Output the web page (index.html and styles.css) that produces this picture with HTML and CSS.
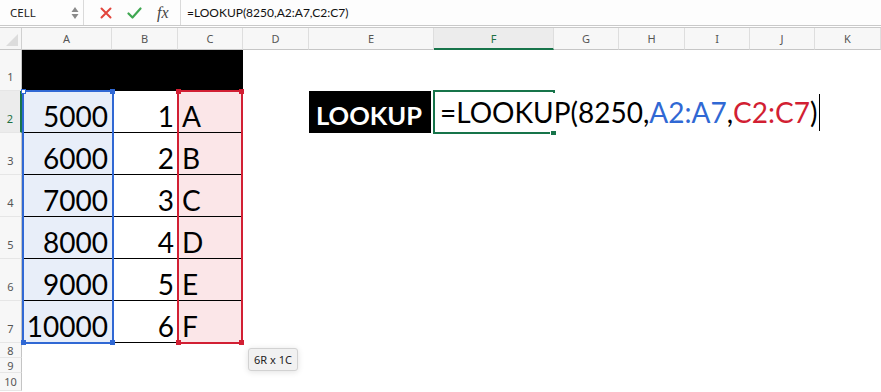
FILE: index.html
```html
<!DOCTYPE html>
<html lang="en">
<head>
    <meta charset="UTF-8">
    <title>LOOKUP</title>
    <link rel="stylesheet" href="styles.css">
</head>
<body>

    <div class="fbar">
        <div class="namebox">
            <span>CELL</span>
            <svg class="spin" width="8" height="16" viewBox="0 0 8 16">
                <path d="M4 2 L7.5 7 L0.5 7 Z" fill="#8a8a8a"/>
                <path d="M4 14 L7.5 9 L0.5 9 Z" fill="#8a8a8a"/>
            </svg>
        </div>
        <div class="tools">
            <svg width="12" height="12" viewBox="0 0 12 12">
                <path d="M1.5 1.5 L10.5 10.5 M10.5 1.5 L1.5 10.5" stroke="#e2453c" stroke-width="2" stroke-linecap="round"/>
            </svg>
            <svg width="15" height="12" viewBox="0 0 15 12">
                <path d="M1.5 6.5 L5.5 10.5 L13.5 1.5" stroke="#3fa751" stroke-width="2.2" fill="none" stroke-linecap="round" stroke-linejoin="round"/>
            </svg>
            <span class="fx">fx</span>
        </div>
        <div class="ftext">=LOOKUP(8250,A2:A7,C2:C7)</div>
    </div>
    <div class="gap"></div>

    <div class="sheet">
        <div class="corner"></div>
        <div class="ch">A</div>
        <div class="ch">B</div>
        <div class="ch">C</div>
        <div class="ch">D</div>
        <div class="ch">E</div>
        <div class="ch active">F</div>
        <div class="ch">G</div>
        <div class="ch">H</div>
        <div class="ch">I</div>
        <div class="ch">J</div>
        <div class="ch">K</div>

        <div class="rh">1</div>
        <div class="black"></div><div class="black"></div><div class="black"></div>

        <div class="rh active">2</div>
        <div class="cell num a">5000</div><div class="cell num b">1</div><div class="cell c">A</div>
        <div class="cell label">LOOKUP</div>

        <div class="rh">3</div>
        <div class="cell num a">6000</div><div class="cell num b">2</div><div class="cell c">B</div>

        <div class="rh">4</div>
        <div class="cell num a">7000</div><div class="cell num b">3</div><div class="cell c">C</div>

        <div class="rh">5</div>
        <div class="cell num a">8000</div><div class="cell num b">4</div><div class="cell c">D</div>

        <div class="rh">6</div>
        <div class="cell num a">9000</div><div class="cell num b">5</div><div class="cell c">E</div>

        <div class="rh">7</div>
        <div class="cell num a">10000</div><div class="cell num b">6</div><div class="cell c">F</div>

        <div class="rh sm">8</div>
        <div class="rh sm">9</div>
        <div class="rh sm">10</div>

        <!-- overlays: reference ranges, edited cell, size tip -->
        <div class="range blue">
            <span class="knob tl hollow"></span><span class="knob tr"></span>
            <span class="knob bl"></span><span class="knob br"></span>
        </div>
        <div class="range red">
            <span class="knob tl"></span><span class="knob tr"></span>
            <span class="knob bl"></span><span class="knob br"></span>
        </div>
        <div class="edit-cell"><span class="handle"></span></div>
        <div class="editor">=LOOKUP(8250,<span class="ref-a">A2:A7</span>,<span class="ref-c">C2:C7</span>)<span class="caret"></span></div>
        <div class="tip">6R x 1C</div>
    </div>

</body>
</html>
```

FILE: styles.css
```css
body {
    margin: 0;
    width: 881px;
    height: 392px;
    overflow: hidden;
    background: #fff;
    font-family: Lato, "Noto Sans", sans-serif;
    color: #000;
}

/* formula bar */
.fbar {
    display: flex;
    align-items: center;
    height: 25px;
    border-bottom: 1px solid #c9c9c9;
    background: #fdfdfd;
}
.namebox {
    box-sizing: border-box;
    width: 84px;
    height: 100%;
    display: flex;
    align-items: center;
    justify-content: space-between;
    padding: 0 4px 0 10px;
    border-right: 1px solid #dadada;
    font-family: "Noto Sans", sans-serif;
    font-size: 11.5px;
    color: #222;
}
.tools {
    box-sizing: border-box;
    width: 97px;
    height: 100%;
    display: flex;
    align-items: center;
    gap: 15px;
    padding-left: 16px;
    border-right: 1px solid #dadada;
}
.fx {
    font-family: "Liberation Serif", serif;
    font-style: italic;
    font-size: 16px;
    color: #444;
}
.ftext {
    padding-left: 6px;
    font-size: 12px;
    color: #111;
}
.gap {
    height: 1px;
}

/* grid */
.sheet {
    position: relative;
    display: grid;
    grid-template-columns: 22px 90px 66px 65px 66px 125px 120px 65px 66px 65px 65px 66px;
    grid-template-rows: 22px 41px repeat(6, 42px) 15px 15px 18px;
    border-top: 1px solid #c9c9c9;
}
.corner {
    background: #f6f6f6;
    border-right: 1px solid #d0d0d0;
    border-bottom: 1px solid #c6c6c6;
    position: relative;
}
.corner::after {
    content: "";
    position: absolute;
    right: 3px;
    bottom: 3px;
    border-left: 12px solid transparent;
    border-bottom: 12px solid #dcdcdc;
}
.ch {
    display: flex;
    align-items: center;
    justify-content: center;
    background: #f7f7f7;
    border-right: 1px solid #dedede;
    border-bottom: 1px solid #c6c6c6;
    font-family: "Noto Sans", sans-serif;
    font-size: 11px;
    color: #555;
}
.ch.active {
    background: #ececec;
    color: #1d7044;
    border-bottom: 2px solid #17744a;
}
.rh {
    grid-column: 1;
    display: flex;
    align-items: flex-end;
    justify-content: center;
    padding-bottom: 8px;
    background: #f7f7f7;
    border-right: 1px solid #c4c4c4;
    border-bottom: 1px solid #e6e6e6;
    font-family: "Noto Sans", sans-serif;
    font-size: 11px;
    line-height: 11px;
    color: #555;
}
.rh.sm {
    align-items: center;
    padding-bottom: 0;
}
.rh.active {
    background: #ececec;
    color: #1d7044;
    border-right: 2px solid #17744a;
}
.black {
    background: #000;
}

.cell {
    box-sizing: border-box;
    display: flex;
    align-items: flex-end;
    padding: 0 4px 2px;
    font-size: 28px;
    line-height: 1;
    white-space: nowrap;
}
.num {
    justify-content: flex-end;
}
.a {
    background: #e8eef9;
    border-bottom: 1px solid #000;
}
.b {
    border-bottom: 1px solid #000;
}
.c {
    background: #fbe6e8;
    border-bottom: 1px solid #000;
}
.label {
    grid-column: 6;
    background: #000;
    color: #fff;
    font-weight: bold;
    font-size: 25.5px;
    padding: 0 8px 5px 7px;
}

/* reference outlines */
.range {
    position: absolute;
    top: 62px;
    height: 254px;
    box-sizing: border-box;
    border: 2px solid;
}
.range.blue {
    left: 22px;
    width: 92px;
    border-color: #3068d4;
}
.range.red {
    left: 177px;
    width: 66px;
    border-color: #d21f33;
}
.knob {
    position: absolute;
    width: 5px;
    height: 5px;
    background: currentColor;
}
.blue .knob { color: #3068d4; }
.red .knob { color: #d21f33; }
.knob.tl { left: -3px; top: -3px; }
.knob.tr { right: -3px; top: -3px; }
.knob.bl { left: -3px; bottom: -3px; }
.knob.br { right: -3px; bottom: -3px; }
.knob.hollow {
    box-sizing: border-box;
    background: #fff;
    border: 1px solid #3068d4;
}

.edit-cell {
    position: absolute;
    left: 433px;
    top: 62px;
    width: 122px;
    height: 44px;
    box-sizing: border-box;
    border: 2px solid #17744a;
    box-shadow: -2px 0 0 #fff;
}
.handle {
    position: absolute;
    right: -3px;
    bottom: -3px;
    width: 5px;
    height: 6px;
    background: #17744a;
    border-left: 1px solid #fff;
}
.editor {
    position: absolute;
    left: 435px;
    top: 65px;
    height: 38px;
    display: flex;
    align-items: center;
    padding: 0 3px 0 5px;
    background: #fff;
    font-size: 28px;
    white-space: nowrap;
}
.ref-a { color: #3068d4; }
.ref-c { color: #d21f33; }
.caret {
    width: 1px;
    height: 37px;
    margin-left: 2px;
    background: #000;
}

.tip {
    position: absolute;
    left: 248px;
    top: 320px;
    padding: 3px 5px;
    background: #f1f1f1;
    border: 1px solid #d2d2d2;
    border-radius: 3px;
    box-shadow: 0 1px 6px rgba(0, 0, 0, 0.12);
    font-family: "Noto Sans", sans-serif;
    font-size: 11px;
    color: #222;
}
```
